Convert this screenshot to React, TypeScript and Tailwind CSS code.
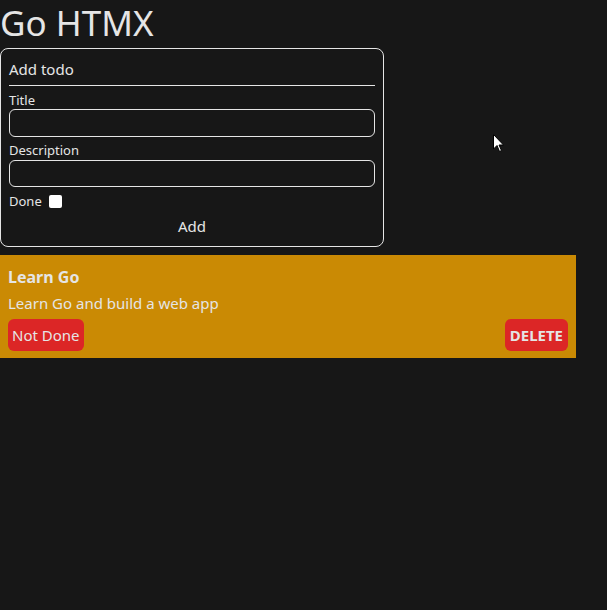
import { useState } from "react";

type Todo = {
  id: number;
  title: string;
  description: string;
  done: boolean;
};

export default function App() {
  const [todos] = useState<Todo[]>([
    { id: 1, title: "Learn Go", description: "Learn Go and build a web app", done: false },
  ]);

  return (
    <div
      className="relative min-h-[610px] bg-[#171717] text-[#e5e5e5]"
      style={{ fontFamily: '"Noto Sans", "Open Sans", sans-serif' }}
    >
      <h1 className="text-[35px] leading-[46px] h-[48px]">Go HTMX</h1>

      {/* Form */}
      <form className="w-96 rounded-lg border border-[#e5e5e5] px-2 pt-[9px] pb-[9px]">
        <h2 className="text-[15px] leading-[22px] pb-[5px] border-b border-[#e5e5e5] mb-[5px]">
          Add todo
        </h2>
        <label className="block text-[13px] leading-[18px]">Title</label>
        <input
          type="text"
          className="block w-full h-[28px] rounded-md border border-[#e5e5e5] bg-transparent mb-[3px]"
        />
        <label className="block text-[13px] leading-[20px]">Description</label>
        <input
          type="text"
          className="block w-full h-[27px] rounded-md border border-[#e5e5e5] bg-transparent mb-[5px]"
        />
        <div className="flex items-center gap-[7px] text-[13px] leading-[18px]">
          <span>Done</span>
          <span className="inline-block w-[13px] h-[13px] rounded-[2px] bg-white" />
        </div>
        <button type="button" className="block w-full text-center text-[15px] leading-[22px] mt-[5px]">
          Add
        </button>
      </form>

      {/* Todos */}
      <div className="mt-2 max-w-xl">
        {todos.map((todo) => (
          <div key={todo.id} className="bg-[#ca8a04] px-2 pt-[11px] pb-[7px]">
            <h3 className="text-[16px] leading-[22px] font-bold">{todo.title}</h3>
            <p className="text-[15px] leading-[22px] mt-[4px]">{todo.description}</p>
            <div className="flex items-center justify-between mt-[5px]">
              <button className="bg-[#dc2626] rounded-md px-[4px] h-[32px] text-[15px]">
                {todo.done ? "Done" : "Not Done"}
              </button>
              <button className="bg-[#dc2626] rounded-md px-[5px] h-[32px] text-[15px] font-bold uppercase">
                Delete
              </button>
            </div>
          </div>
        ))}
      </div>

      {/* mouse cursor */}
      <svg className="absolute left-[493px] top-[134px]" width="12" height="19" viewBox="0 0 12 19">
        <path d="M0.5 0.5 L0.5 15 L4 11.5 L6.5 17.5 L8.5 16.5 L6 11 L10.5 11 Z" fill="#fff" stroke="#000" strokeWidth="1" />
      </svg>
    </div>
  );
}
